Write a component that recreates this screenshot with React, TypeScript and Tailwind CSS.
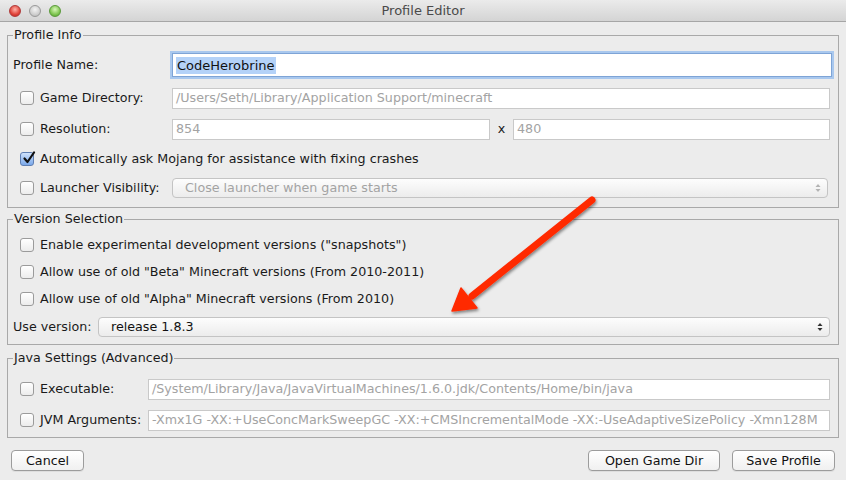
import React from 'react';

const font = { fontFamily: '"DejaVu Sans", "Liberation Sans", sans-serif' };

const Check: React.FC<{ checked?: boolean }> = ({ checked }) =>
  checked ? (
    <span className="relative inline-flex h-[14px] w-[14px] shrink-0 items-center justify-center rounded-[3px] border border-[#5f7fb3] bg-gradient-to-b from-[#cfe2fb] to-[#7aa8ea]">
      <svg width="14" height="14" viewBox="0 0 14 14" className="absolute -top-[2px] left-[1px]">
        <path d="M2.5 7.5 L5.5 11 L12 1.5" fill="none" stroke="#111" strokeWidth="2.2" strokeLinecap="round" strokeLinejoin="round" />
      </svg>
    </span>
  ) : (
    <span className="inline-block h-[14px] w-[14px] shrink-0 rounded-[3px] border border-[#9b9b9b] bg-gradient-to-b from-white to-[#ececec] shadow-[inset_0_1px_0_#fff]" />
  );

const Field: React.FC<{ value: string; className?: string }> = ({ value, className = '' }) => (
  <div className={`flex h-[21px] items-center overflow-hidden whitespace-nowrap border border-[#c9c9c9] bg-white pl-[3px] text-[12.7px] text-[#a3a3a3] ${className}`}>
    {value}
  </div>
);

const Select: React.FC<{ value: string; disabled?: boolean; className?: string }> = ({ value, disabled, className = '' }) => (
  <div
    className={`flex h-[20px] items-center justify-between rounded-[4px] border border-[#c4c4c4] bg-gradient-to-b from-[#fdfdfd] to-[#ececec] pl-[12px] pr-[6px] text-[12.7px] ${
      disabled ? 'text-[#a3a3a3]' : 'text-[#111]'
    } ${className}`}
  >
    <span>{value}</span>
    <svg width="6" height="10" viewBox="0 0 6 10">
      <path d="M3 1 L5.5 4 H0.5 Z" fill={disabled ? '#b3b3b3' : '#333'} />
      <path d="M3 9 L5.5 6 H0.5 Z" fill={disabled ? '#b3b3b3' : '#333'} />
    </svg>
  </div>
);

const CheckRow: React.FC<{ label: string; checked?: boolean; labelW?: string; className?: string; children?: React.ReactNode }> = ({
  label,
  checked,
  labelW,
  className = '',
  children,
}) => (
  <div className={`flex h-[22px] items-center pl-[12px] pr-[8px] ${className}`}>
    <Check checked={checked} />
    <span className={`ml-[6px] shrink-0 whitespace-nowrap text-[12.7px] text-[#1a1a1a] ${labelW ?? ''}`}>{label}</span>
    {children}
  </div>
);

const Legend: React.FC<{ children: React.ReactNode }> = ({ children }) => (
  <legend className="ml-[5px] px-[1px] text-[12.7px] leading-[16px] text-[#1a1a1a]">{children}</legend>
);

const Button: React.FC<{ label: string; className?: string }> = ({ label, className = '' }) => (
  <button className={`flex h-[21px] items-center justify-center rounded-[4px] border border-[#9c9c9c] bg-gradient-to-b from-white to-[#f0f0f0] text-[12.7px] text-[#111] shadow-[0_1px_0_rgba(0,0,0,0.06)] ${className}`}>
    {label}
  </button>
);

export default function App() {
  return (
    <div className="relative h-[480px] w-[846px] overflow-hidden bg-[#ececec]" style={font}>
      {/* title bar */}
      <div className="relative flex h-[22px] items-center justify-center border-b border-[#a6a6a6] bg-gradient-to-b from-[#ebebeb] to-[#d4d4d4]">
        <div className="absolute left-[9px] top-[5px] flex gap-[8px]">
          <span className="h-[12px] w-[12px] rounded-full border border-[#b03a3a] bg-[radial-gradient(circle_at_50%_35%,#ffb3a9,#e0443a_60%,#b8201b)]" />
          <span className="h-[12px] w-[12px] rounded-full border border-[#9a9a9a] bg-[radial-gradient(circle_at_50%_35%,#f4f4f4,#cfcfcf_60%,#b3b3b3)]" />
          <span className="h-[12px] w-[12px] rounded-full border border-[#5a9a3a] bg-[radial-gradient(circle_at_50%_35%,#d8f7b8,#80c652_60%,#4f9a2c)]" />
        </div>
        <span className="text-[13px] text-[#4a4a4a]">Profile Editor</span>
      </div>

      <div className="px-[7px]">
        {/* Profile Info */}
        <fieldset className="mt-[5px] border border-[#a9a9a9] pb-[8px]">
          <Legend>Profile Info</Legend>
          <div className="mt-[10px] flex h-[24px] items-center pl-[5px] pr-[6px]">
            <span className="w-[159px] shrink-0 text-[12.7px] text-[#1a1a1a]">Profile Name:</span>
            <div className="flex h-[24px] flex-1 items-center border border-[#7ea4d6] bg-white pl-[3px] shadow-[0_0_0_2px_#a9c8ee]">
              <span className="bg-[#b4d2f8] px-[1px] text-[13px] leading-[17px] text-[#111]">CodeHerobrine</span>
            </div>
          </div>
          <CheckRow label="Game Directory:" labelW="w-[132px]" className="mt-[10px]">
            <Field value="/Users/Seth/Library/Application Support/minecraft" className="flex-1" />
          </CheckRow>
          <CheckRow label="Resolution:" labelW="w-[132px]" className="mt-[9px]">
            <Field value="854" className="w-[318px]" />
            <span className="w-[23px] text-center text-[12.7px] text-[#1a1a1a]">x</span>
            <Field value="480" className="flex-1" />
          </CheckRow>
          <CheckRow label="Automatically ask Mojang for assistance with fixing crashes" checked className="mt-[8px]" />
          <CheckRow label="Launcher Visibility:" labelW="w-[132px]" className="mt-[7px]">
            <Select value="Close launcher when game starts" disabled className="mr-[2px] flex-1" />
          </CheckRow>
        </fieldset>

        {/* Version Selection */}
        <fieldset className="mt-[3px] border border-[#a9a9a9] pb-[6px]">
          <Legend>Version Selection</Legend>
          <CheckRow label={'Enable experimental development versions ("snapshots")'} className="mt-[7px]" />
          <CheckRow label={'Allow use of old "Beta" Minecraft versions (From 2010-2011)'} className="mt-[5px]" />
          <CheckRow label={'Allow use of old "Alpha" Minecraft versions (From 2010)'} className="mt-[5px]" />
          <div className="mt-[6px] flex h-[22px] items-center pl-[5px] pr-[8px]">
            <span className="w-[85px] shrink-0 text-[12.7px] text-[#1a1a1a]">Use version:</span>
            <Select value="release 1.8.3" className="flex-1" />
          </div>
        </fieldset>

        {/* Java Settings */}
        <fieldset className="mt-[5px] border border-[#a9a9a9] pb-[6px]">
          <Legend>Java Settings (Advanced)</Legend>
          <CheckRow label="Executable:" labelW="w-[108px]" className="mt-[12px]">
            <Field value="/System/Library/Java/JavaVirtualMachines/1.6.0.jdk/Contents/Home/bin/java" className="flex-1" />
          </CheckRow>
          <CheckRow label="JVM Arguments:" labelW="w-[108px]" className="mt-[9px]">
            <Field
              value="-Xmx1G -XX:+UseConcMarkSweepGC -XX:+CMSIncrementalMode -XX:-UseAdaptiveSizePolicy -Xmn128M"
              className="flex-1"
            />
          </CheckRow>
        </fieldset>

        {/* buttons */}
        <div className="mt-[12px] flex items-center">
          <Button label="Cancel" className="ml-[4px] w-[73px]" />
          <div className="flex-1" />
          <Button label="Open Game Dir" className="w-[132px]" />
          <Button label="Save Profile" className="ml-[12px] mr-[4px] w-[103px]" />
        </div>
      </div>

      {/* annotation arrow */}
      <svg className="pointer-events-none absolute left-0 top-0" width="846" height="480">
        <defs>
          <filter id="sh" x="-20%" y="-20%" width="140%" height="140%">
            <feDropShadow dx="1" dy="2" stdDeviation="1.5" floodColor="#000" floodOpacity="0.45" />
          </filter>
        </defs>
        <g filter="url(#sh)">
          <line x1="592" y1="200" x2="472" y2="296" stroke="#ff2a00" strokeWidth="7" strokeLinecap="round" />
          <path d="M452 311 L461 288 L477 308 Z" fill="#ff2a00" stroke="#ff2a00" strokeWidth="1.5" strokeLinejoin="round" />
        </g>
      </svg>
    </div>
  );
}
